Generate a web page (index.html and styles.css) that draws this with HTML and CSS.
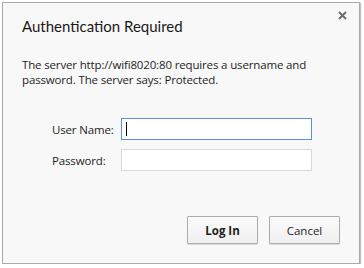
FILE: index.html
```html
<!DOCTYPE html>
<html lang="en">
  <head>
    <meta charset="UTF-8" />
    <title>Authentication Required</title>
    <link rel="stylesheet" href="styles.css">
  </head>
  <body>
    <div class="dialog">
      <div class="title-row">
        <h1>Authentication Required</h1>
        <svg class="close" width="9" height="9" viewBox="0 0 9 9">
          <path d="M1 1 L8 8 M8 1 L1 8" stroke="#6e6e6e" stroke-width="2" />
        </svg>
      </div>
      <p class="message">The server http://wifi8020:80 requires a username and password. The server says: Protected.</p>
      <form class="fields">
        <div class="field">
          <label for="user">User Name:</label>
          <div class="input focused"><span class="caret"></span></div>
        </div>
        <div class="field">
          <label for="pass">Password:</label>
          <div class="input"></div>
        </div>
      </form>
      <div class="buttons">
        <button class="button primary">Log In</button>
        <button class="button">Cancel</button>
      </div>
    </div>
  </body>
</html>
```

FILE: styles.css
```css
body {
  margin: 0;
  background: #ffffff;
  font-family: "Open Sans", "Noto Sans", sans-serif;
  color: #1e1e1e;
}

.dialog {
  margin: 2px 0 0 2px;
  width: 358px;
  height: 262px;
  box-sizing: border-box;
  border: 1px solid #a9a9a9;
  background: #f8f8f8;
  box-shadow: 1px 1px 1px rgba(0, 0, 0, 0.25);
  padding: 0 19px 0 19px;
}

.title-row {
  display: flex;
  justify-content: space-between;
  align-items: flex-start;
  height: 48px;
}

h1 {
  margin: 14px 0 0 0;
  font-family: Lato, "Open Sans", sans-serif;
  font-size: 15px;
  line-height: 18px;
  font-weight: normal;
  color: #1a1a1a;
}

.close {
  margin: 8px -7px 0 0;
}

.message {
  margin: 6px 0 0 0;
  font-size: 11.5px;
  line-height: 15px;
  letter-spacing: -0.15px;
}

.fields {
  margin: 31px 0 0 30px;
  display: flex;
  flex-direction: column;
  gap: 9px;
}

.field {
  display: flex;
  align-items: center;
}

label {
  width: 69px;
  font-size: 11.5px;
  letter-spacing: -0.15px;
}

.input {
  width: 191px;
  height: 22px;
  box-sizing: border-box;
  border: 1px solid #d9d9d9;
  background: #ffffff;
  display: flex;
  align-items: center;
  padding-left: 4px;
}

.input.focused {
  border-color: #5b8fe3;
}

.caret {
  width: 1px;
  height: 14px;
  background: #000000;
}

.buttons {
  margin-top: 45px;
  display: flex;
  justify-content: flex-end;
  gap: 11px;
}

.button {
  width: 71px;
  height: 28px;
  border: 1px solid #acacac;
  border-radius: 1px;
  background: linear-gradient(#fafafa, #f0f0f0);
  box-shadow: 0 1px 1px rgba(0, 0, 0, 0.12);
  font-family: "Open Sans", "Noto Sans", sans-serif;
  font-size: 11.5px;
  color: #1e1e1e;
}

.primary {
  font-weight: bold;
}
```
